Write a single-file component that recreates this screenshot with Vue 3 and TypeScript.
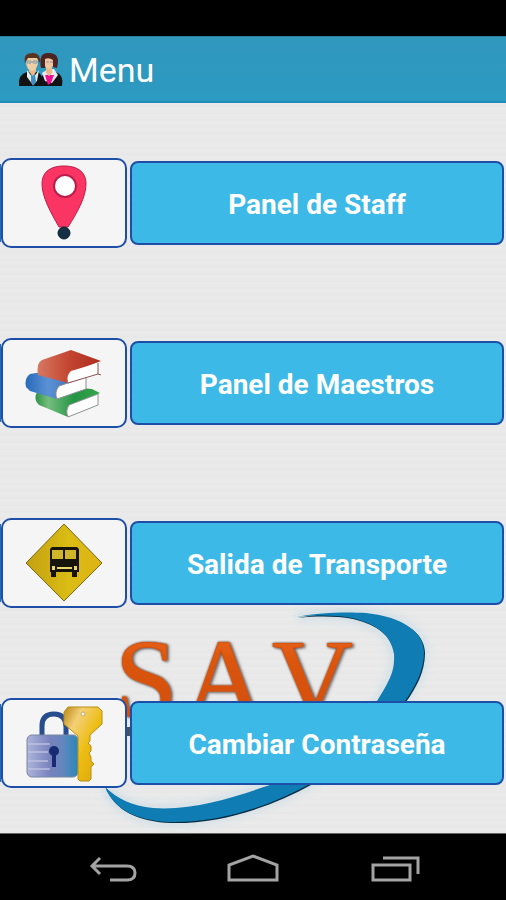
<script setup lang="ts">
type IconName = 'pin' | 'books' | 'bus' | 'lock'

interface MenuEntry {
  label: string
  icon: IconName
}

const entries: MenuEntry[] = [
  { label: 'Panel de Staff', icon: 'pin' },
  { label: 'Panel de Maestros', icon: 'books' },
  { label: 'Salida de Transporte', icon: 'bus' },
  { label: 'Cambiar Contraseña', icon: 'lock' },
]
</script>

<template>
  <div class="screen">
    <div class="status-bar"></div>

    <header class="app-bar">
      <svg class="app-icon" viewBox="0 0 46 38" aria-hidden="true">
        <path d="M1 35 Q0 23 9 21 L20 21 Q26 25 25 35 Z" fill="#111315" />
        <path d="M22 35 Q21 23 30 21 L38 21 Q46 24 44 35 Z" fill="#111315" />
        <path d="M9 19 L15 27 L21 19 L19 30 L15 34 L9 26 Z" fill="#e4edf2" />
        <path d="M13 23 h4 l1 8 l-3 4 l-2 -4z" fill="#3f8fc4" />
        <path d="M24 22 L30 18 L36 18 L40 24 L34 32 L27 30 Z" fill="#ece9ee" />
        <path d="M27 24 h9 l-3 8 l-3 2z" fill="#ee0f93" />
        <path d="M11 15 h7 v6 l-3 4 l-4 -4z M28 15 h6 v7 l-3 3 l-3 -3z" fill="#e9b98c" />
        <ellipse cx="14" cy="11" rx="6" ry="9" fill="#f1cda4" />
        <path d="M7 12 Q5 2 14 2 Q23 1 22 12 L19 7 L10 7 Z" fill="#573523" />
        <path d="M23 17 Q20 1 31 2 Q43 2 39 17 L35 16 L35 9 L27 9 L27 17 Z" fill="#4d2422" />
        <path d="M27 8 Q31 6 35 9 L35 15 Q31 21 27 15 Z" fill="#f3c6a2" />
        <path d="M9 10 h4 v2 h-4z M15 10 h4 v2 h-4z M28 11 h3 M32 11 h3" fill="#c8dce0" stroke="#87969c" stroke-width="1" />
      </svg>
      <h1 class="title">Menu</h1>
    </header>

    <main class="content">
      <svg class="brand" viewBox="0 600 506 233" aria-hidden="true">
        <defs>
          <filter id="halo" x="-10%" y="-10%" width="120%" height="120%">
            <feGaussianBlur stdDeviation="4" />
          </filter>
          <filter id="letter-shadow" x="-10%" y="-10%" width="120%" height="120%">
            <feDropShadow dx="0" dy="0" stdDeviation="1" flood-color="#4a2a18" flood-opacity="0.9" />
            <feDropShadow dx="2" dy="1" stdDeviation="1" flood-color="#333" flood-opacity="0.5" />
          </filter>
          <linearGradient id="orange" x1="0" y1="0" x2="0" y2="1">
            <stop offset="0" stop-color="#ef6a22" />
            <stop offset="0.4" stop-color="#d9540b" />
            <stop offset="1" stop-color="#d04c05" />
          </linearGradient>
          <path
            id="swoosh"
            d="M297 617 C322 612 348 612 366 613 C404 617 424 633 424 652 C424 671 415 687 405 701 C386 733 350 764 310 784 C270 806 220 823 170 822 C138 821 114 810 105 787 C116 798 132 806 153 808 C194 811 237 796 270 785 C318 765 361 737 377 701 C390 680 395 671 394 654 C391 635 377 624 352 618 C335 615 315 615 297 617 Z"
          />
        </defs>
        <use href="#swoosh" fill="none" stroke="#a9cfe3" stroke-width="6" opacity="0.5" filter="url(#halo)" />
        <use href="#swoosh" fill="#062c44" transform="translate(1 1)" />
        <use href="#swoosh" fill="#0f7db3" />
        <g class="brand-text" fill="url(#orange)" stroke="#d9540b" stroke-width="1" filter="url(#letter-shadow)">
          <text x="115" y="717">S</text>
          <text x="184" y="717">A</text>
          <text x="272" y="717">V</text>
        </g>
        <rect x="127" y="727" width="3" height="9" fill="#49535e" />
      </svg>

      <ul class="menu">
        <li v-for="entry in entries" :key="entry.icon" class="row">
          <button class="tile" type="button" :aria-label="entry.label">
            <svg v-if="entry.icon === 'pin'" class="icon" viewBox="0 0 80 80">
              <path d="M40 3 C51 3 62 7 62 21 C62 34 53 50 44 64 L35 64 C27 50 18 34 18 21 C18 7 29 3 40 3 Z" fill="#fb3563" stroke="#bb1d4a" stroke-width="1" />
              <circle cx="41" cy="23" r="11" fill="#fff" stroke="#bb1d4a" stroke-width="2" />
              <circle cx="40" cy="70" r="6" fill="#152f44" stroke="#0c2233" stroke-width="1" />
            </svg>

            <svg v-else-if="entry.icon === 'books'" class="icon" viewBox="0 0 80 80">
              <defs>
                <linearGradient id="red" x1="0" y1="0" x2="1" y2="0">
                  <stop offset="0" stop-color="#d67862" />
                  <stop offset="0.5" stop-color="#c34530" />
                  <stop offset="1" stop-color="#ad2c20" />
                </linearGradient>
                <linearGradient id="blue" x1="0" y1="0" x2="1" y2="0">
                  <stop offset="0" stop-color="#286abb" />
                  <stop offset="0.4" stop-color="#5b91d4" />
                  <stop offset="1" stop-color="#3267b2" />
                </linearGradient>
                <linearGradient id="green" x1="0" y1="0" x2="1" y2="0">
                  <stop offset="0" stop-color="#2d9345" />
                  <stop offset="0.2" stop-color="#75bd7d" />
                  <stop offset="0.6" stop-color="#229543" />
                  <stop offset="1" stop-color="#36a64a" />
                </linearGradient>
              </defs>
              <path d="M13 49 Q9 57 15 62 L44 74 L46 63 L76 50 L68 46 L45 44 Z" fill="url(#green)" />
              <path d="M45 62 L74 51 V62 L44 74 Q41 68 45 62 Z" fill="#fff" stroke="#8c918e" stroke-width="1" />
              <path d="M18 29 L6 31 Q0 35 2 44 L6 48 L33 56 L36 45 L58 37 Z" fill="url(#blue)" />
              <path d="M35 43 L62 34 V46 L33 56 Q30 49 35 43 Z" fill="#fff" stroke="#898e99" stroke-width="1" />
              <path d="M47 7 L18 17 Q12 20 14 32 L44 40 Q43 32 48 29 L77 18 Z" fill="url(#red)" />
              <path d="M47 28 L74 20 V31 L44 40 Q42 32 47 28 Z" fill="#fff" />
              <path d="M74 20 V31 L77 32 M74 31 L44 40" fill="none" stroke="#8d5350" stroke-width="1" />
            </svg>

            <svg v-else-if="entry.icon === 'bus'" class="icon" viewBox="0 0 80 80">
              <defs>
                <linearGradient id="sign" x1="0" y1="0" x2="1" y2="0">
                  <stop offset="0" stop-color="#c2a012" />
                  <stop offset="0.55" stop-color="#dabc14" />
                  <stop offset="1" stop-color="#dfb414" />
                </linearGradient>
              </defs>
              <path d="M40 1 L78 40 L40 78 L2 40 Z" fill="url(#sign)" stroke="#766719" stroke-width="1" stroke-linejoin="round" />
              <path d="M28 24 H53 L55 26 V49 H53 V54 H48 V49 H32 V54 H27 V49 H26 V26 Z" fill="#17140b" />
              <path d="M28 27 H39 V36 H28 Z M41 27 H52 V36 H41 Z" fill="#d0b52a" />
              <path d="M33 44 H48 V46 H33 Z M28 43 H31 V47 H28 Z M50 43 H53 V47 H50 Z" fill="#ead568" />
            </svg>

            <svg v-else class="icon" viewBox="0 0 80 80">
              <defs>
                <linearGradient id="body" x1="0" y1="0" x2="1" y2="0">
                  <stop offset="0" stop-color="#adb4d9" />
                  <stop offset="0.45" stop-color="#7882bd" />
                  <stop offset="0.7" stop-color="#6387bd" />
                  <stop offset="1" stop-color="#2887bb" />
                </linearGradient>
                <linearGradient id="gold" x1="0" y1="0" x2="1" y2="1">
                  <stop offset="0" stop-color="#ba8714" />
                  <stop offset="0.25" stop-color="#f3d077" />
                  <stop offset="0.55" stop-color="#edbd14" />
                  <stop offset="1" stop-color="#dba607" />
                </linearGradient>
              </defs>
              <path d="M18 34 V23 Q18 11 30 11 Q42 11 42 24 V34" fill="none" stroke="#264d8d" stroke-width="5" />
              <rect x="3" y="32" width="51" height="42" rx="5" fill="url(#body)" stroke="#7688a1" stroke-width="1" />
              <path d="M4 41 H26 M4 49 H24 M4 58 H24 M4 66 H26" stroke="#c6cae6" stroke-width="2" opacity="0.6" />
              <circle cx="30" cy="48" r="5" fill="#172b72" />
              <path d="M28 50 H32 V64 H28 Z" fill="#172b72" />
              <path d="M44 4 H74 L78 8 V21 L66 32 V38 L64 40 L67 43 V48 L65 50 L67 54 V58 L70 61 L67 64 V76 L65 78 H56 L54 76 V33 L40 21 V9 Z" fill="url(#gold)" stroke="#b98c12" stroke-width="1" />
              <circle cx="59" cy="11" r="2" fill="#fff" stroke="#c4a557" stroke-width="1" />
            </svg>
          </button>
          <button class="action" type="button">{{ entry.label }}</button>
        </li>
      </ul>
    </main>

    <nav class="nav-bar" aria-label="Sistema">
      <button class="nav-button" type="button" aria-label="Atrás">
        <svg class="nav-icon" viewBox="0 0 52 36" aria-hidden="true">
          <path d="M15 8 L7 16 L15 24 M7 16 H42 Q50 16 50 23 Q50 30 42 30 H25" />
        </svg>
      </button>
      <button class="nav-button" type="button" aria-label="Inicio">
        <svg class="nav-icon" viewBox="0 0 52 36" aria-hidden="true">
          <path d="M2 30 V15 L26 6 L50 15 V30 Z" />
        </svg>
      </button>
      <button class="nav-button" type="button" aria-label="Recientes">
        <svg class="nav-icon" viewBox="0 0 52 36" aria-hidden="true">
          <path d="M4 15 H41 V30 H4 Z M14 8 H49 V24" />
        </svg>
      </button>
    </nav>
  </div>
</template>

<style>
body {
  margin: 0;
}
</style>

<style scoped>
.screen {
  display: flex;
  flex-direction: column;
  min-height: 100vh;
  background: #000;
  font-family: Roboto, "Liberation Sans", sans-serif;
}

.status-bar {
  height: 36px;
}

.app-bar {
  display: flex;
  align-items: center;
  gap: 5px;
  box-sizing: border-box;
  height: 67px;
  padding: 2px 18px 0;
  background: linear-gradient(#3097bd, #2d9ac1);
  border-top: 1px solid #2b80a0;
  border-bottom: 2px solid #1f8db6;
}

.app-icon {
  width: 46px;
  height: 38px;
}

.title {
  margin: 0;
  color: #fff;
  font-size: 34px;
  font-weight: 400;
  line-height: 40px;
}

.content {
  position: relative;
  flex: 1;
  padding: 55px 2px 45px 0;
  background: repeating-linear-gradient(#e9e9e9 0 2px, #e8e8e8 2px 4px, #eaeaea 4px 7px);
}

.brand {
  position: absolute;
  left: 0;
  bottom: 0;
  width: 100%;
}

.brand-text {
  font-family: "Liberation Serif", serif;
  font-size: 112px;
}

.menu {
  position: relative;
  display: flex;
  flex-direction: column;
  gap: 90px;
  margin: 0;
  padding: 0;
  list-style: none;
}

.row {
  display: flex;
  align-items: center;
  gap: 3px;
}

.row::before {
  content: "";
  width: 1px;
  height: 78px;
  margin-right: -3px;
  background: #1e6fb8;
}

.tile,
.action {
  box-sizing: border-box;
  margin: 0;
  border: 2px solid #1e4fa8;
  font-family: inherit;
  cursor: pointer;
}

.tile {
  display: flex;
  align-items: center;
  justify-content: center;
  flex: none;
  width: 126px;
  height: 90px;
  padding: 0;
  background: #f5f5f5;
  border-radius: 10px;
}

.icon {
  width: 80px;
  height: 80px;
}

.action {
  flex: 1;
  height: 84px;
  padding: 4px 8px 0;
  background: #3cb9e6;
  border-radius: 8px;
  color: #fff;
  font-size: 28px;
  font-weight: 700;
  line-height: 34px;
}

.nav-bar {
  display: flex;
  justify-content: center;
  gap: 90px;
  box-sizing: border-box;
  height: 67px;
  padding: 16px 0;
  border-top: 1px solid #666;
}

.nav-button {
  display: flex;
  padding: 0;
  border: 0;
  background: none;
  cursor: pointer;
}

.nav-icon {
  width: 52px;
  height: 36px;
  fill: none;
  stroke: #a3a3a3;
  stroke-width: 3;
}
</style>
